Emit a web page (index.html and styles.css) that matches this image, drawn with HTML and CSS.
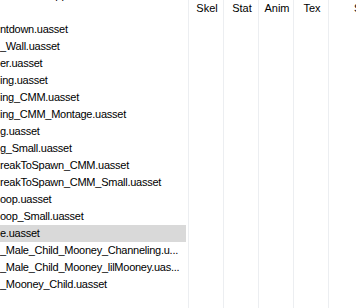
FILE: index.html
```
<!DOCTYPE html>
<html lang="en">

<head>
    <meta charset="UTF-8">
    <title>Asset List</title>
    <link rel="stylesheet" href="styles.css">
</head>

<body>
    <div class="list">
        <div class="names">
            <div class="head"><span class="cut">Mapp</span></div>
            <div class="row">ntdown.uasset</div>
            <div class="row">_Wall.uasset</div>
            <div class="row">er.uasset</div>
            <div class="row">ing.uasset</div>
            <div class="row">ing_CMM.uasset</div>
            <div class="row">ing_CMM_Montage.uasset</div>
            <div class="row">g.uasset</div>
            <div class="row">g_Small.uasset</div>
            <div class="row">reakToSpawn_CMM.uasset</div>
            <div class="row">reakToSpawn_CMM_Small.uasset</div>
            <div class="row">oop.uasset</div>
            <div class="row">oop_Small.uasset</div>
            <div class="row selected">e.uasset</div>
            <div class="row">_Male_Child_Mooney_Channeling.u...</div>
            <div class="row">_Male_Child_Mooney_lilMooney.uas...</div>
            <div class="row">_Mooney_Child.uasset</div>
        </div>
        <div class="col"><div class="head">Skel</div></div>
        <div class="col"><div class="head">Stat</div></div>
        <div class="col"><div class="head">Anim</div></div>
        <div class="col"><div class="head">Tex</div></div>
        <div class="col wide"><div class="head">Sound</div></div>
    </div>
</body>

</html>
```

FILE: styles.css
```
body {
    margin: 0;
    padding: 0;
    background: #ffffff;
    font-family: 'Liberation Sans', Arial, sans-serif;
    font-size: 11px;
    color: #000000;
    overflow: hidden;
}

.list {
    display: flex;
    width: 356px;
    height: 308px;
    overflow: hidden;
}

.names {
    flex: 0 0 188px;
    display: flex;
    flex-direction: column;
}

.head {
    height: 21px;
    line-height: 17px;
    overflow: hidden;
    white-space: nowrap;
}

.names .head {
    padding-left: 40px;
}

.cut {
    display: block;
    margin-top: -13px;
}

.row {
    height: 17px;
    line-height: 17px;
    width: 186px;
    letter-spacing: -0.25px;
    white-space: nowrap;
    overflow: hidden;
}

.row.selected {
    background: #d9d9d9;
}

.col {
    flex: 0 0 34px;
    border-left: 1px solid #eceef1;
    text-align: center;
}

.col .head {
    padding-left: 2px;
}

.col.wide {
    flex: 0 0 70px;
    text-align: left;
}

.col.wide .head {
    padding-left: 25px;
}
```
